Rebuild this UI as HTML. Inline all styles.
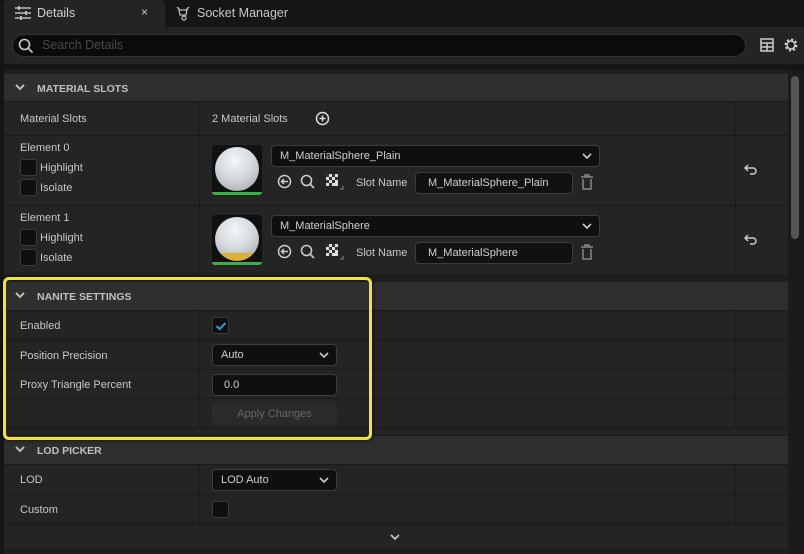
<!DOCTYPE html>
<html><head><style>
*{margin:0;padding:0;box-sizing:border-box}
body{width:804px;height:554px;background:#151515;position:relative;overflow:hidden;font-family:"Liberation Sans",sans-serif;font-size:11px;color:#c8c8c8}
.a{position:absolute}
.row{position:absolute;left:4px;width:784px;background:#242424;border-bottom:1px solid #1a1a1a}
.hdr{position:absolute;left:4px;width:784px;background:#2f2f2f;border-bottom:1px solid #1a1a1a;font-weight:bold;font-size:10.5px;color:#c0c0c0}
.hdr span{position:absolute;left:33px;top:9px}
.chev{position:absolute;left:10px;top:8px}
.vl{position:absolute;top:0;bottom:0;width:1px;background:#1a1a1a}
.lbl{position:absolute;left:16px}
.cb{position:absolute;width:17px;height:17px;background:#0f0f0f;border:1px solid #3a3a3a;border-radius:3px}
.dd{position:absolute;background:#0f0f0f;border:1px solid #3c3c3c;border-radius:4px;color:#d0d0d0}
.sph{position:absolute;left:211px;top:11px;width:44px;height:44px;border-radius:50%;background:radial-gradient(circle at 45% 30%,#f4f6f7,#d5dadd 45%,#aab0b4 85%,#8a9094 100%)}
</style></head><body>
<div class="a" style="left:4px;top:0;width:161px;height:27px;background:#242424;border-radius:4px 4px 0 0"></div>
<svg class="a" style="left:14px;top:5px" width="18" height="16" viewBox="0 0 18 16" stroke="#bbb" stroke-width="1.5"><path d="M1 3h16M1 8h16M1 13h16"/><path d="M5 1v4M12 6v4M7 11v4" stroke-width="2"/></svg>
<div class="a" style="left:37px;top:6px;font-size:12.5px;color:#d0d0d0">Details</div>
<div class="a" style="left:141px;top:5px;font-size:12px;color:#ccc">×</div>
<svg class="a" style="left:174px;top:4px" width="18" height="18" viewBox="0 0 18 18" stroke="#bbb" fill="none" stroke-width="1.3"><path d="M3 3l3 3M15 3l-3 3M5 6h8l-1 5H6z"/><circle cx="10" cy="14" r="2"/></svg>
<div class="a" style="left:197px;top:6px;font-size:12.5px;color:#c8c8c8">Socket Manager</div>
<div class="a" style="left:4px;top:27px;width:800px;height:37px;background:#242424"></div>
<div class="a" style="left:12px;top:34px;width:734px;height:23px;background:#0b0b0b;border:1px solid #333;border-radius:12px"></div>
<svg class="a" style="left:18px;top:38px" width="16" height="16" viewBox="0 0 16 16" stroke="#ccc" fill="none" stroke-width="1.6"><circle cx="6.5" cy="6.5" r="5"/><path d="M10 10l4.5 4.5"/></svg>
<div class="a" style="left:42px;top:38px;font-size:12.5px;color:#4a4a4a">Search Details</div>
<svg class="a" style="left:760px;top:38px" width="14" height="14" viewBox="0 0 14 14" fill="none" stroke="#ccc" stroke-width="1.5"><rect x="1" y="1" width="12" height="12"/><path d="M1 5h12M1 9h12M7 5v8"/></svg>
<svg class="a" style="left:783px;top:37px" width="16" height="16" viewBox="0 0 16 16"><circle cx="8" cy="8" r="5" fill="none" stroke="#ccc" stroke-width="3" stroke-dasharray="2 1.9"/><circle cx="8" cy="8" r="4" fill="none" stroke="#ccc" stroke-width="1.5"/></svg>
<div class="a" style="left:4px;top:70px;width:784px;height:484px;background:#1e1e1e"></div>
<div class="a" style="left:788px;top:70px;width:16px;height:484px;background:#1b1b1b"></div>
<div class="a" style="left:791px;top:76px;width:8px;height:163px;background:#555;border-radius:4px"></div>

<div class="hdr" style="top:74px;height:28px"><svg class="chev" width="12" height="10" viewBox="0 0 12 10"><path d="M2 3l4 4 4-4" stroke="#bbb" stroke-width="2" fill="none"/></svg><span>MATERIAL SLOTS</span></div>

<div class="row" style="top:102px;height:34px"><div class="vl" style="left:195px"></div><div class="vl" style="left:731px"></div>
<div class="lbl" style="top:11px">Material Slots</div><div class="a" style="left:208px;top:11px">2 Material Slots</div>
<svg class="a" style="left:311px;top:9px" width="15" height="15" viewBox="0 0 15 15" stroke="#ddd" fill="none" stroke-width="1.5"><circle cx="7.5" cy="7.5" r="6"/><path d="M7.5 4.5v6M4.5 7.5h6"/></svg></div>

<div class="row" style="top:136px;height:70px"><div class="vl" style="left:195px"></div><div class="vl" style="left:731px"></div>
<div class="lbl" style="top:6px">Element 0</div>
<div class="cb" style="left:16px;top:23px"></div><div class="a" style="left:36px;top:26px">Highlight</div>
<div class="cb" style="left:16px;top:43px"></div><div class="a" style="left:36px;top:46px">Isolate</div>
<div class="a" style="left:208px;top:9px;width:50px;height:50px;background:#111;border-radius:3px;border-bottom:3px solid #3bb04a"></div>
<div class="sph"></div>
<div class="dd" style="left:267px;top:9px;width:329px;height:22px"><span class="a" style="left:8px;top:4px">M_MaterialSphere_Plain</span><svg class="a" style="right:7px;top:6px" width="10" height="8" viewBox="0 0 10 8"><path d="M1 2l4 4 4-4" stroke="#ccc" stroke-width="1.6" fill="none"/></svg></div>
<svg class="a" style="left:273px;top:38px" width="15" height="15" viewBox="0 0 15 15" stroke="#ccc" fill="none" stroke-width="1.5"><circle cx="7.5" cy="7.5" r="6"/><path d="M11 7.5H4.5M7 5l-2.5 2.5L7 10"/></svg>
<svg class="a" style="left:296px;top:38px" width="15" height="15" viewBox="0 0 15 15" stroke="#ccc" fill="none" stroke-width="1.6"><circle cx="6.5" cy="6.5" r="5"/><path d="M10 10l4 4"/></svg>
<svg class="a" style="left:322px;top:38px" width="18" height="16" viewBox="0 0 18 16"><rect x="0" y="0" width="12" height="12" fill="#ddd"/><path d="M0 0h3v3H0zM6 0h3v3H6zM3 3h3v3H3zM9 3h3v3H9zM0 6h3v3H0zM6 6h3v3H6zM3 9h3v3H3z" fill="#333"/><path d="M14 15h3v-3" stroke="#888" fill="none"/></svg>
<div class="a" style="left:352px;top:41px">Slot Name</div>
<div class="dd" style="left:411px;top:36px;width:158px;height:22px;background:#111"><span class="a" style="left:12px;top:4px">M_MaterialSphere_Plain</span></div>
<svg class="a" style="left:576px;top:38px" width="14" height="16" viewBox="0 0 14 16" stroke="#888" fill="none" stroke-width="1.5"><path d="M1 3h12M5 3V1h4v2M3 5v10h8V5"/></svg>
<svg class="a" style="left:740px;top:28px" width="14" height="12" viewBox="0 0 14 12" stroke="#ccc" fill="none" stroke-width="1.5"><path d="M4 1L1 4l3 3M1 4h8a3 3 0 010 6H6"/></svg></div>

<div class="row" style="top:206px;height:70px"><div class="vl" style="left:195px"></div><div class="vl" style="left:731px"></div>
<div class="lbl" style="top:6px">Element 1</div>
<div class="cb" style="left:16px;top:23px"></div><div class="a" style="left:36px;top:26px">Highlight</div>
<div class="cb" style="left:16px;top:43px"></div><div class="a" style="left:36px;top:46px">Isolate</div>
<div class="a" style="left:208px;top:9px;width:50px;height:50px;background:#111;border-radius:3px;border-bottom:3px solid #3bb04a"></div>
<div class="sph" style="background:linear-gradient(180deg,transparent 80%,#d9b23a 83%),radial-gradient(circle at 45% 30%,#f4f6f7,#d5dadd 45%,#aab0b4 85%,#8a9094 100%)"></div>
<div class="dd" style="left:267px;top:9px;width:329px;height:22px"><span class="a" style="left:8px;top:4px">M_MaterialSphere</span><svg class="a" style="right:7px;top:6px" width="10" height="8" viewBox="0 0 10 8"><path d="M1 2l4 4 4-4" stroke="#ccc" stroke-width="1.6" fill="none"/></svg></div>
<svg class="a" style="left:273px;top:38px" width="15" height="15" viewBox="0 0 15 15" stroke="#ccc" fill="none" stroke-width="1.5"><circle cx="7.5" cy="7.5" r="6"/><path d="M11 7.5H4.5M7 5l-2.5 2.5L7 10"/></svg>
<svg class="a" style="left:296px;top:38px" width="15" height="15" viewBox="0 0 15 15" stroke="#ccc" fill="none" stroke-width="1.6"><circle cx="6.5" cy="6.5" r="5"/><path d="M10 10l4 4"/></svg>
<svg class="a" style="left:322px;top:38px" width="18" height="16" viewBox="0 0 18 16"><rect x="0" y="0" width="12" height="12" fill="#ddd"/><path d="M0 0h3v3H0zM6 0h3v3H6zM3 3h3v3H3zM9 3h3v3H9zM0 6h3v3H0zM6 6h3v3H6zM3 9h3v3H3z" fill="#333"/><path d="M14 15h3v-3" stroke="#888" fill="none"/></svg>
<div class="a" style="left:352px;top:41px">Slot Name</div>
<div class="dd" style="left:411px;top:36px;width:158px;height:22px;background:#111"><span class="a" style="left:12px;top:4px">M_MaterialSphere</span></div>
<svg class="a" style="left:576px;top:38px" width="14" height="16" viewBox="0 0 14 16" stroke="#888" fill="none" stroke-width="1.5"><path d="M1 3h12M5 3V1h4v2M3 5v10h8V5"/></svg>
<svg class="a" style="left:740px;top:28px" width="14" height="12" viewBox="0 0 14 12" stroke="#ccc" fill="none" stroke-width="1.5"><path d="M4 1L1 4l3 3M1 4h8a3 3 0 010 6H6"/></svg></div>

<div class="hdr" style="top:282px;height:29px"><svg class="chev" width="12" height="10" viewBox="0 0 12 10"><path d="M2 3l4 4 4-4" stroke="#bbb" stroke-width="2" fill="none"/></svg><span>NANITE SETTINGS</span></div>
<div class="row" style="top:311px;height:30px"><div class="vl" style="left:195px"></div><div class="vl" style="left:731px"></div>
<div class="lbl" style="top:9px">Enabled</div><div class="cb" style="left:208px;top:6px"></div>
<svg class="a" style="left:211px;top:10px" width="12" height="10" viewBox="0 0 12 10"><path d="M1.5 5l3 3 6-6" stroke="#2aa0d8" stroke-width="2" fill="none"/></svg></div>
<div class="row" style="top:341px;height:29px"><div class="vl" style="left:195px"></div><div class="vl" style="left:731px"></div>
<div class="lbl" style="top:9px">Position Precision</div>
<div class="dd" style="left:208px;top:3px;width:125px;height:22px"><span class="a" style="left:8px;top:4px">Auto</span><svg class="a" style="right:7px;top:6px" width="10" height="8" viewBox="0 0 10 8"><path d="M1 2l4 4 4-4" stroke="#ccc" stroke-width="1.6" fill="none"/></svg></div></div>
<div class="row" style="top:370px;height:29px"><div class="vl" style="left:195px"></div><div class="vl" style="left:731px"></div>
<div class="lbl" style="top:9px">Proxy Triangle Percent</div>
<div class="dd" style="left:208px;top:4px;width:125px;height:22px"><span class="a" style="left:11px;top:4px">0.0</span></div></div>
<div class="row" style="top:399px;height:30px"><div class="vl" style="left:195px"></div><div class="vl" style="left:731px"></div>
<div class="a" style="left:208px;top:4px;width:125px;height:22px;background:#2a2a2a;border-radius:3px;color:#666;text-align:center;line-height:22px">Apply Changes</div></div>
<div class="row" style="top:429px;height:7px"></div>

<div class="hdr" style="top:436px;height:29px"><svg class="chev" width="12" height="10" viewBox="0 0 12 10"><path d="M2 3l4 4 4-4" stroke="#bbb" stroke-width="2" fill="none"/></svg><span>LOD PICKER</span></div>
<div class="row" style="top:465px;height:30px"><div class="vl" style="left:195px"></div><div class="vl" style="left:731px"></div>
<div class="lbl" style="top:9px">LOD</div>
<div class="dd" style="left:208px;top:4px;width:125px;height:22px"><span class="a" style="left:8px;top:4px">LOD Auto</span><svg class="a" style="right:7px;top:6px" width="10" height="8" viewBox="0 0 10 8"><path d="M1 2l4 4 4-4" stroke="#ccc" stroke-width="1.6" fill="none"/></svg></div></div>
<div class="row" style="top:495px;height:29px"><div class="vl" style="left:195px"></div><div class="vl" style="left:731px"></div>
<div class="lbl" style="top:9px">Custom</div><div class="cb" style="left:208px;top:6px"></div></div>
<div class="row" style="top:524px;height:26px"><svg class="a" style="left:386px;top:9px" width="10" height="8" viewBox="0 0 10 8"><path d="M1 2l4 4 4-4" stroke="#ccc" stroke-width="1.6" fill="none"/></svg></div>

<div class="a" style="left:3px;top:277px;width:369px;height:163px;border:3px solid #f5e52a;border-radius:6px;box-shadow:0 0 4px rgba(0,0,0,.8)"></div>
</body></html>
